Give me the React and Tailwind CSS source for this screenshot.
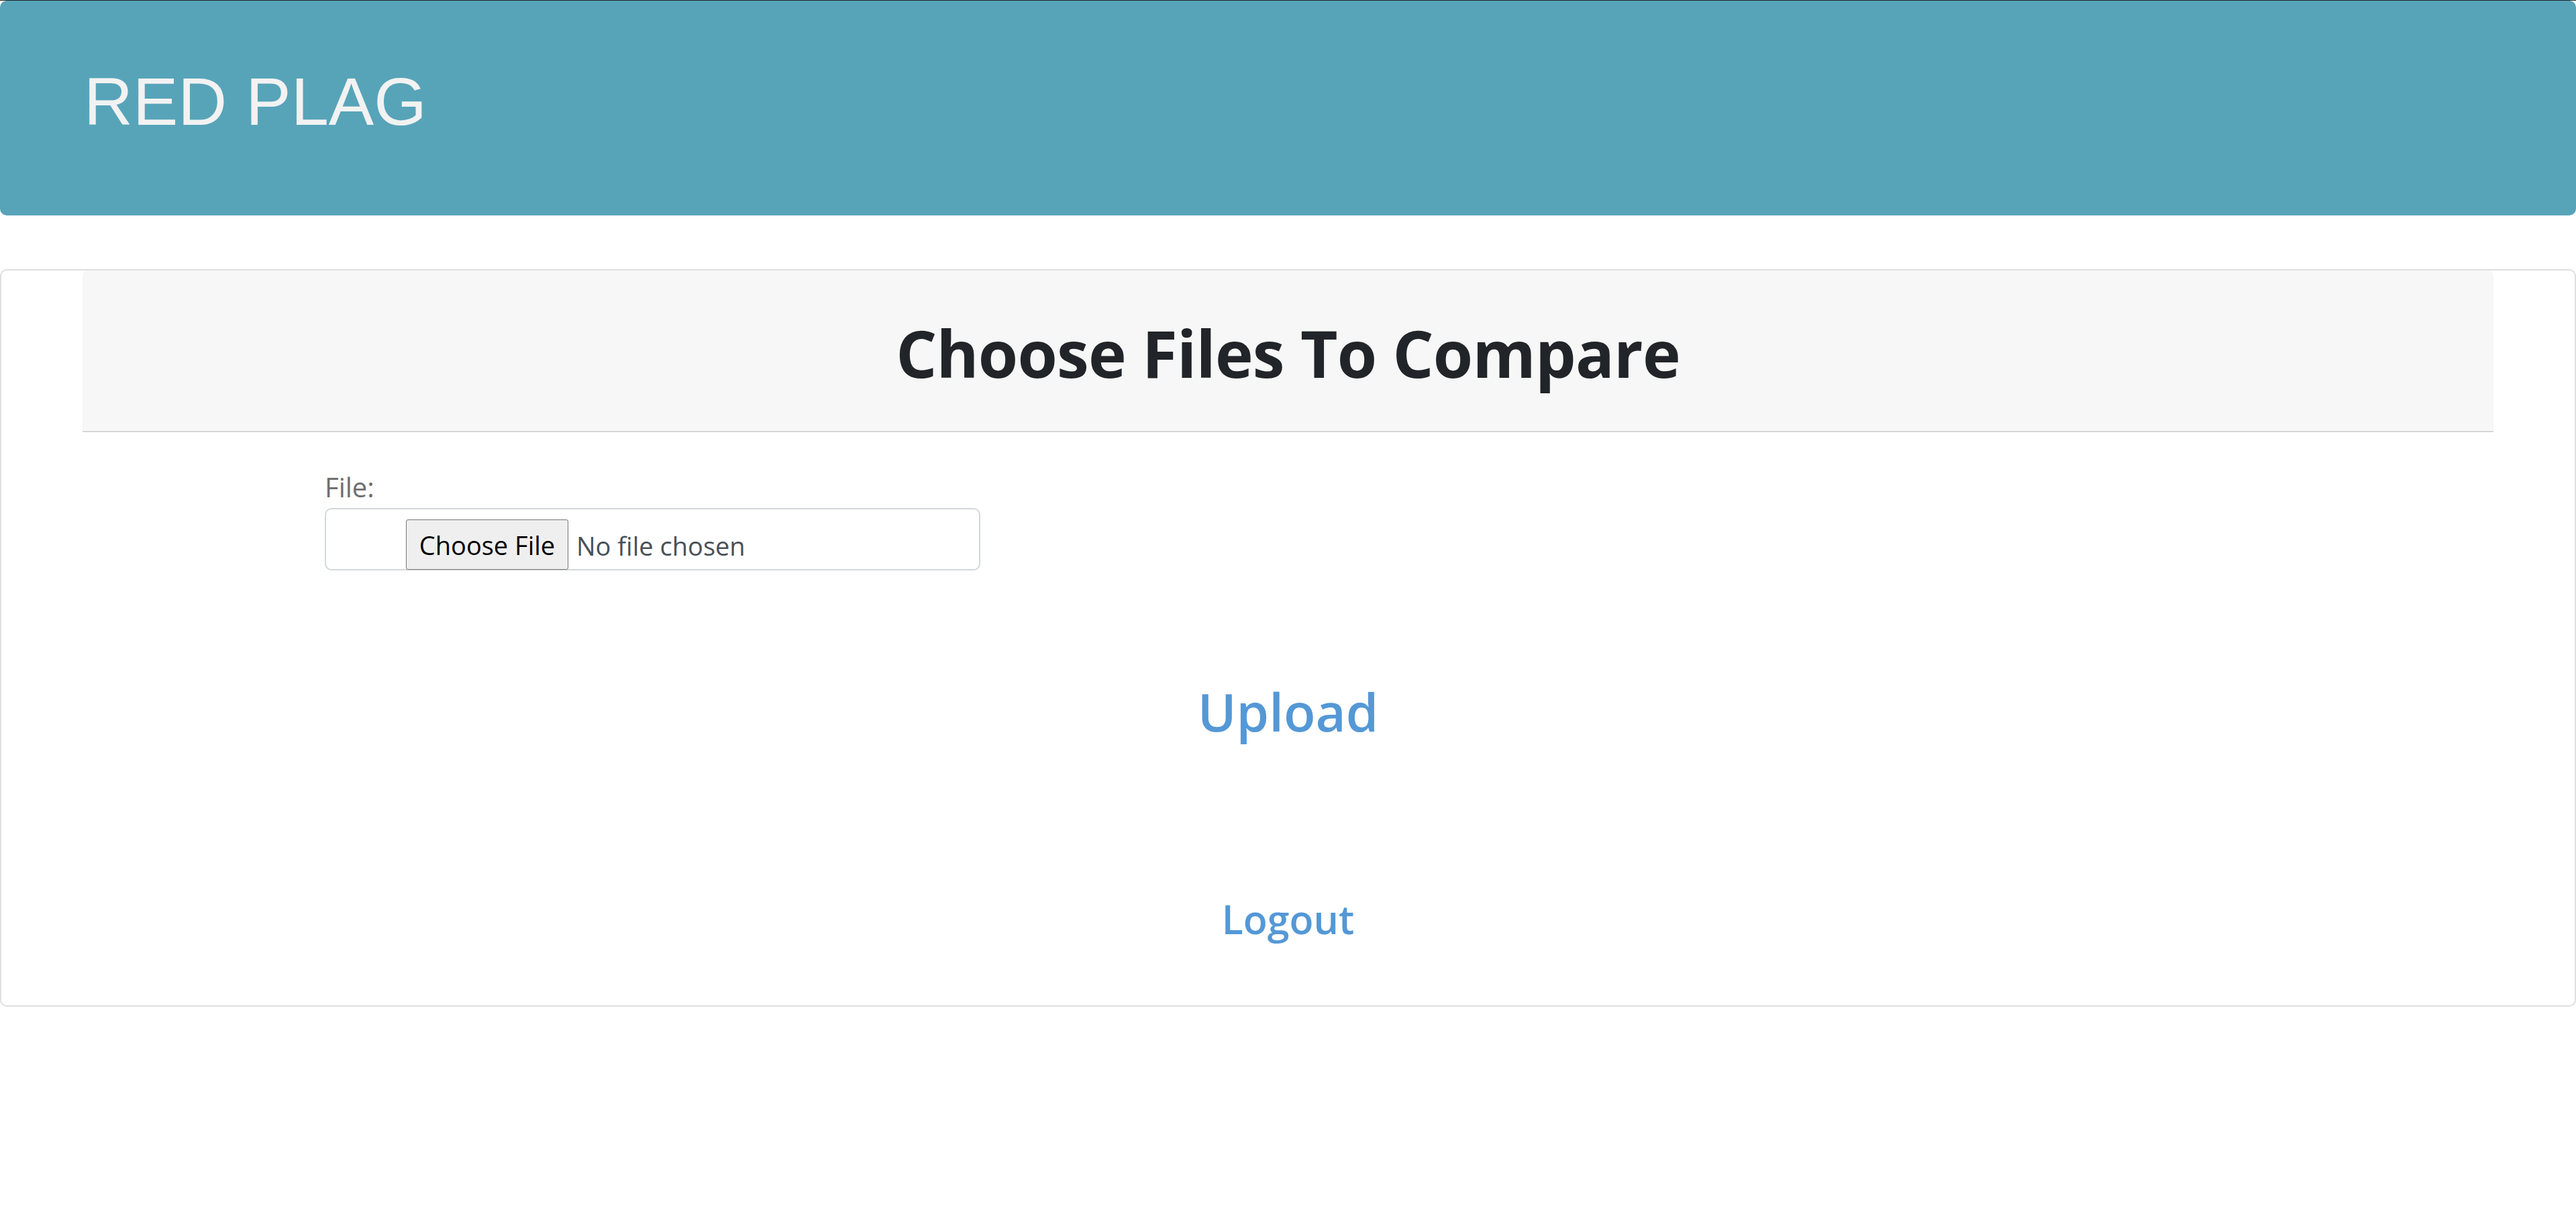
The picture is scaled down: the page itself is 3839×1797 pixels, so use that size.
export default function App() {
  const seg = { fontFamily: '"Open Sans", "Noto Sans", sans-serif' };
  return (
    <div className="w-full min-h-screen bg-white">
      <div className="h-px bg-[#232323]" />
      <header className="h-[320px] bg-[#57a4b9] rounded-[10px] pl-[125px] pt-[90px]">
        <h1
          className="text-[101px] leading-[120px] text-[#f2f2f2] font-normal"
          style={{ fontFamily: '"Liberation Sans", Arial, sans-serif' }}
        >
          RED PLAG
        </h1>
      </header>
      <div className="h-[80px]" />
      <section
        className="h-[1099px] border-2 border-[#dfdfdf] rounded-[10px] px-[121px] flex flex-col"
        style={seg}
      >
        <div className="h-[241px] bg-[#f7f7f7] border-b-2 border-[#d6d6d6] rounded-t-[8px] pt-[63px] flex justify-center">
          <h1 className="text-[96px] leading-[120px] font-bold tracking-[-0.8px] text-[#212529]">
            Choose Files To Compare
          </h1>
        </div>
        <div className="pl-[361px] pt-[52px] flex flex-col">
          <label className="text-[40px] leading-[60px] text-[#6f6f6f]">File:</label>
          <div className="mt-px w-[977px] h-[93px] border-2 border-[#d3d7db] rounded-[10px] pl-[119px] flex items-start">
            <span className="mt-[15px] w-[242px] h-[75px] border border-[#767676] rounded-[3px] bg-[#efefef] flex items-center justify-center text-[38px] leading-[50px] text-black">
              Choose File
            </span>
            <span className="ml-[12px] mt-[28px] text-[38px] leading-[52px] text-[#495057]">
              No file chosen
            </span>
          </div>
        </div>
        <div className="mt-[162px] flex justify-center">
          <a className="text-[78px] leading-[96px] font-semibold text-[#5498d6]">Upload</a>
        </div>
        <div className="mt-[225px] flex justify-center">
          <a className="text-[59px] leading-[72px] font-semibold text-[#5498d6]">Logout</a>
        </div>
      </section>
    </div>
  );
}
